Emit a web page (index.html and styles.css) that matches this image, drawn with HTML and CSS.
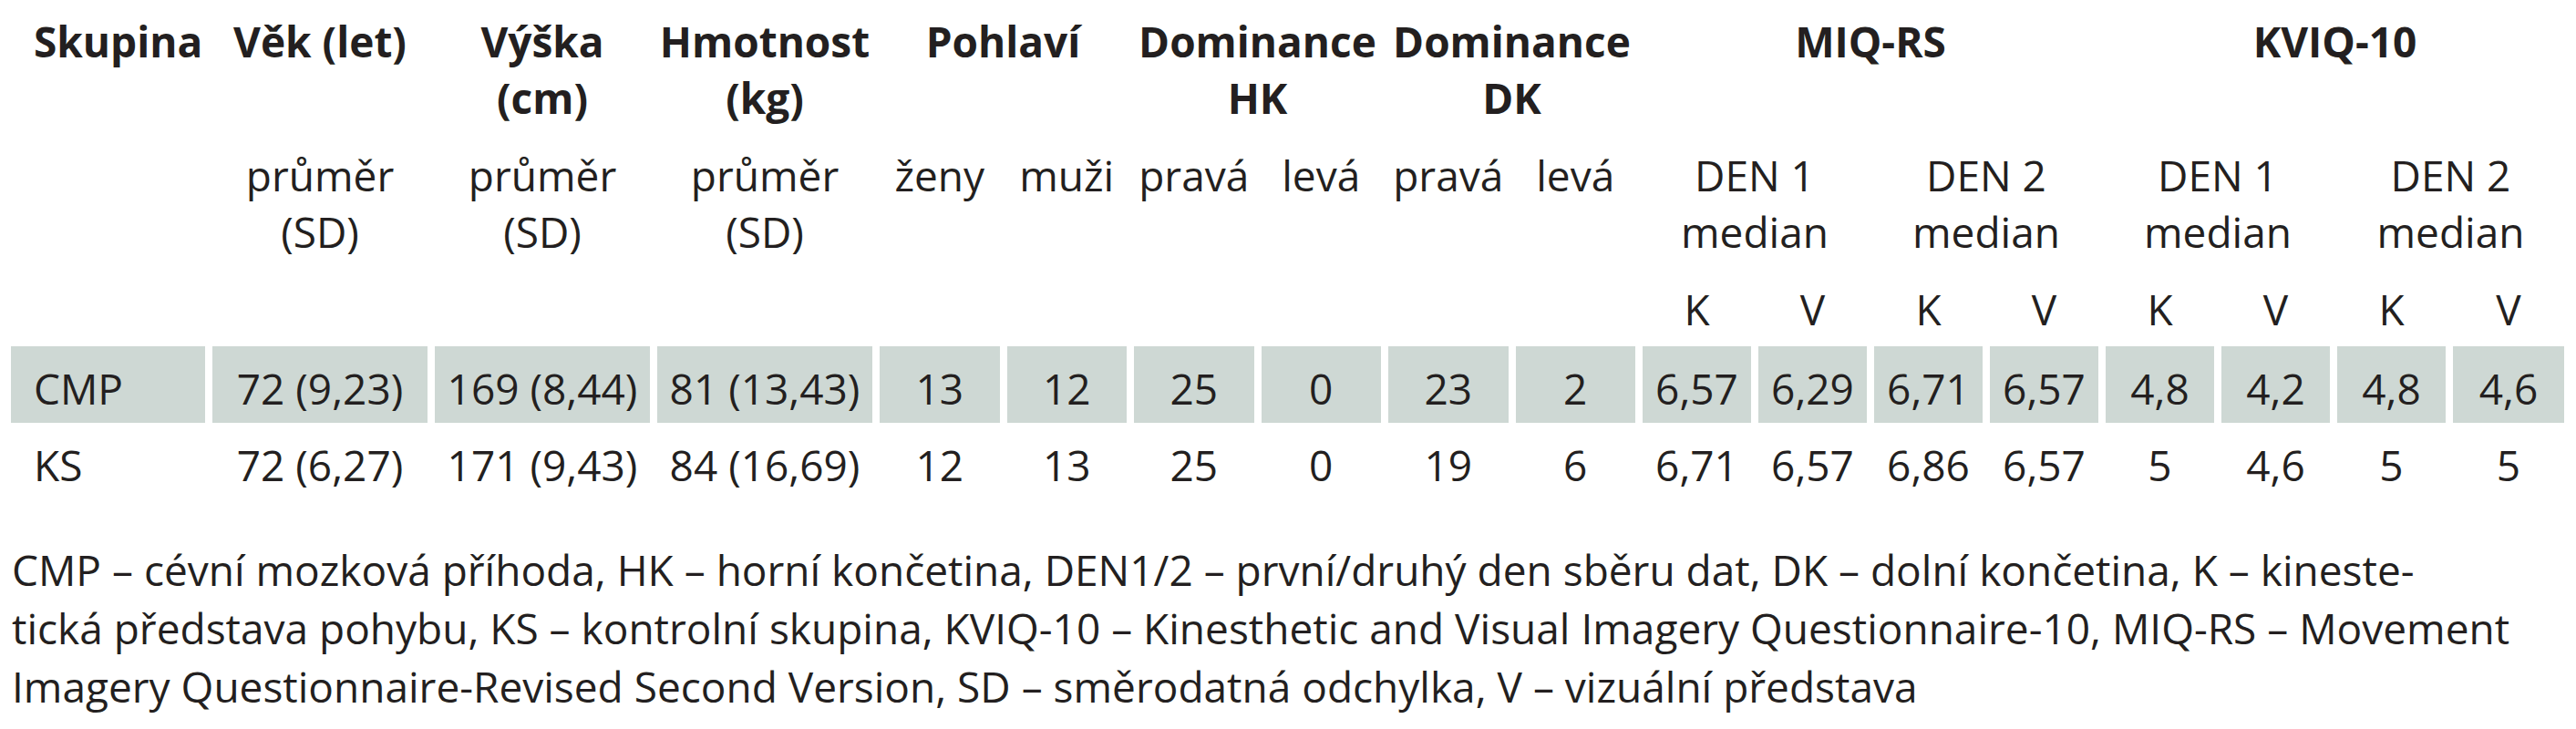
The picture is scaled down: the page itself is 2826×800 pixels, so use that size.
FILE: index.html
```html
<!DOCTYPE html>
<html lang="cs">
<head>
<meta charset="utf-8">
<title>Tabulka – charakteristika skupin</title>
<link rel="stylesheet" href="styles.css">
</head>
<body>
<div class="table">
  <div class="th left">Skupina</div>
  <div class="th">Věk (let)</div>
  <div class="th">Výška<br>(cm)</div>
  <div class="th">Hmotnost<br>(kg)</div>
  <div class="th span2">Pohlaví</div>
  <div class="th span2">Dominance<br>HK</div>
  <div class="th span2">Dominance<br>DK</div>
  <div class="th span4">MIQ-RS</div>
  <div class="th span4">KVIQ-10</div>

  <div class="sh"></div>
  <div class="sh">průměr<br>(SD)</div>
  <div class="sh">průměr<br>(SD)</div>
  <div class="sh">průměr<br>(SD)</div>
  <div class="sh">ženy</div>
  <div class="sh">muži</div>
  <div class="sh">pravá</div>
  <div class="sh">levá</div>
  <div class="sh">pravá</div>
  <div class="sh">levá</div>
  <div class="sh span2">DEN 1<br>median</div>
  <div class="sh span2">DEN 2<br>median</div>
  <div class="sh span2">DEN 1<br>median</div>
  <div class="sh span2">DEN 2<br>median</div>

  <div class="kv span10"></div>
  <div class="kv">K</div><div class="kv">V</div>
  <div class="kv">K</div><div class="kv">V</div>
  <div class="kv">K</div><div class="kv">V</div>
  <div class="kv">K</div><div class="kv">V</div>

  <div class="td shade left">CMP</div>
  <div class="td shade">72 (9,23)</div>
  <div class="td shade">169 (8,44)</div>
  <div class="td shade">81 (13,43)</div>
  <div class="td shade">13</div>
  <div class="td shade">12</div>
  <div class="td shade">25</div>
  <div class="td shade">0</div>
  <div class="td shade">23</div>
  <div class="td shade">2</div>
  <div class="td shade">6,57</div>
  <div class="td shade">6,29</div>
  <div class="td shade">6,71</div>
  <div class="td shade">6,57</div>
  <div class="td shade">4,8</div>
  <div class="td shade">4,2</div>
  <div class="td shade">4,8</div>
  <div class="td shade">4,6</div>

  <div class="td left">KS</div>
  <div class="td">72 (6,27)</div>
  <div class="td">171 (9,43)</div>
  <div class="td">84 (16,69)</div>
  <div class="td">12</div>
  <div class="td">13</div>
  <div class="td">25</div>
  <div class="td">0</div>
  <div class="td">19</div>
  <div class="td">6</div>
  <div class="td">6,71</div>
  <div class="td">6,57</div>
  <div class="td">6,86</div>
  <div class="td">6,57</div>
  <div class="td">5</div>
  <div class="td">4,6</div>
  <div class="td">5</div>
  <div class="td">5</div>
</div>

<p class="note">CMP – cévní mozková příhoda, HK – horní končetina, DEN1/2 – první/druhý den sběru dat, DK – dolní končetina, K – kineste-<br>tická představa pohybu, KS – kontrolní skupina, KVIQ-10 – Kinesthetic and Visual Imagery Questionnaire-10, MIQ-RS – Movement<br>Imagery Questionnaire-Revised Second Version, SD – směrodatná odchylka, V – vizuální představa</p>
</body>
</html>
```

FILE: styles.css
```css
html, body {
  margin: 0;
  padding: 0;
  background: #ffffff;
}

body {
  font-family: "Open Sans", "Noto Sans", "Liberation Sans", sans-serif;
  font-size: 46px;
  color: #231f20;
}

.table {
  display: grid;
  grid-template-columns: 213px repeat(3, 236px) repeat(6, 131.5px) repeat(7, 119px) 122px;
  column-gap: 8px;
  margin: 0 0 0 12px;
  width: max-content;
}

.th, .sh, .kv, .td {
  text-align: center;
  white-space: nowrap;
  line-height: 62px;
}

.th {
  font-weight: 700;
  padding-top: 14px;
  height: 124px;
}

.sh {
  padding-top: 23px;
  height: 124px;
}

.kv {
  padding-top: 23px;
  height: 62px;
  margin-bottom: 10px;
}

.td {
  height: 84px;
  box-sizing: border-box;
  padding-top: 15px;
}

.shade {
  background: #ced8d4;
}

.left {
  text-align: left;
  padding-left: 25px;
}

.span2 { grid-column: span 2; }
.span4 { grid-column: span 4; }
.span10 { grid-column: span 10; }

.note {
  margin: 45px 0 0 13px;
  line-height: 64px;
  white-space: nowrap;
}
```
